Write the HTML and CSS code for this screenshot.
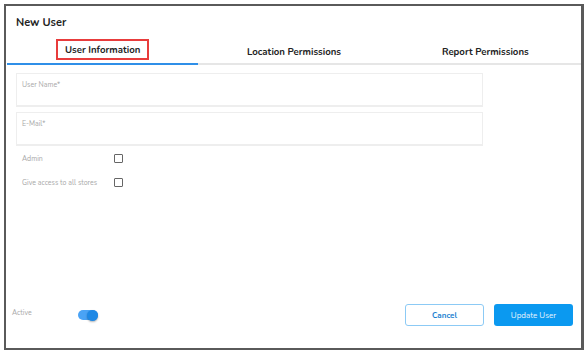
FILE: index.html
```html
<!DOCTYPE html>
<html lang="en">
<head>
    <meta charset="UTF-8">
    <title>New User</title>
    <link rel="stylesheet" href="styles.css">
</head>
<body>
    <div class="dialog">
        <h1>New User</h1>
        <div class="tabs">
            <div class="tab active"><span class="highlight">User Information</span></div>
            <div class="tab">Location Permissions</div>
            <div class="tab">Report Permissions</div>
        </div>
        <div class="form">
            <div class="field">User Name*</div>
            <div class="field">E-Mail*</div>
            <div class="check-row">
                <span class="check-label">Admin</span>
                <span class="checkbox"></span>
            </div>
            <div class="check-row">
                <span class="check-label">Give access to all stores</span>
                <span class="checkbox"></span>
            </div>
        </div>
        <div class="footer">
            <div class="active-row">
                <span class="active-label">Active</span>
                <span class="toggle"><span class="knob"></span></span>
            </div>
            <div class="actions">
                <button class="button cancel">Cancel</button>
                <button class="button primary">Update User</button>
            </div>
        </div>
    </div>
</body>
</html>
```

FILE: styles.css
```css
body {
    margin: 0;
    padding: 4px;
    font-family: 'Nunito', 'Lato', sans-serif;
    background-color: #ffffff;
}
.dialog {
    width: 580px;
    height: 346px;
    border: 2px solid #5a5a5a;
    border-right-width: 3px;
    box-sizing: border-box;
    display: flex;
    flex-direction: column;
}
h1 {
    margin: 0;
    padding: 9px 0 0 10px;
    font-size: 11px;
    font-weight: bold;
    color: #222;
    height: 30px;
    box-sizing: border-box;
}
.tabs {
    display: flex;
    width: 574px;
    margin: 3px 0 0 1px;
    border-bottom: 2px solid #e6e6e6;
}
.tab {
    flex: 1;
    font-size: 9.6px;
    font-weight: bold;
    color: #222;
    height: 26px;
    padding-bottom: 2px;
    display: flex;
    align-items: center;
    justify-content: center;
    box-sizing: border-box;
    margin-bottom: -2px;
}
.tab.active {
    border-bottom: 2px solid #2f8fe8;
}
.highlight {
    border: 2px solid #e83c3c;
    padding: 2px 7px;
    margin-top: -2px;
}
.form {
    padding: 8px 0 0 10px;
    display: flex;
    flex-direction: column;
}
.field {
    width: 467px;
    height: 34px;
    border: 1px solid #eeeeee;
    border-bottom-width: 2px;
    box-sizing: border-box;
    padding: 6px 5px;
    font-size: 7px;
    color: #a8a8a8;
    margin-bottom: 5px;
}
.field + .field {
    margin-bottom: 0;
}
.check-row {
    display: flex;
    align-items: center;
    height: 24px;
    padding-left: 6px;
}
.check-label {
    width: 92px;
    font-size: 7px;
    color: #a8a8a8;
}
.checkbox {
    width: 7px;
    height: 7px;
    border: 1px solid #666;
    border-radius: 1px;
}
.footer {
    margin-top: auto;
    display: flex;
    align-items: center;
    justify-content: space-between;
    padding: 0 8px 22px 6px;
}
.active-row {
    display: flex;
    align-items: center;
}
.active-label {
    font-size: 7px;
    color: #a8a8a8;
    width: 66px;
    margin-top: -6px;
}
.toggle {
    width: 20px;
    height: 10px;
    border-radius: 5px;
    background-color: #4aa3f5;
    display: flex;
    justify-content: flex-end;
    align-items: center;
}
.knob {
    width: 11px;
    height: 11px;
    border-radius: 50%;
    background-color: #1e88e5;
    box-shadow: 0 1px 2px rgba(0, 0, 0, 0.3);
}
.actions {
    display: flex;
    gap: 10px;
}
.button {
    width: 79px;
    height: 22px;
    border-radius: 3px;
    font-family: 'Nunito', 'Lato', sans-serif;
    font-size: 8px;
    cursor: pointer;
}
.cancel {
    background-color: #fff;
    border: 1px solid #8ccaf5;
    color: #1a7fd0;
    font-weight: bold;
}
.primary {
    background-color: #0b99f0;
    border: none;
    color: #e8f4fd;
}
```
